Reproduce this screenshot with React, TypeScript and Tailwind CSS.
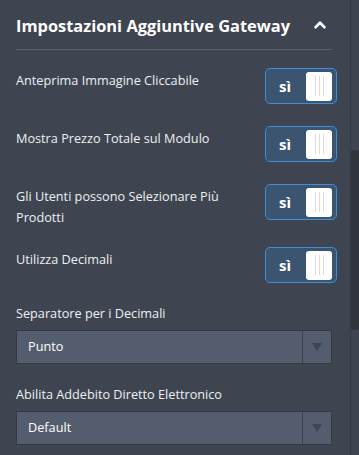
import { ChevronUp } from "lucide-react"

const toggles = [
  { label: "Anteprima Immagine Cliccabile", h: "h-[58px]" },
  { label: "Mostra Prezzo Totale sul Modulo", h: "h-[58px]" },
  { label: "Gli Utenti possono Selezionare Più Prodotti", h: "h-[63px]" },
  { label: "Utilizza Decimali", h: "h-[55px]" },
]

function Toggle() {
  return (
    <div className="flex items-center w-[72px] h-[36px] -mr-[5px] rounded-[5px] border-[1.5px] border-[#3a8fd6] bg-[#3b5470] pl-[13px] pr-[4px]">
      <span className="text-white font-bold text-[15px] w-[28px]">sì</span>
      <div className="flex items-center justify-center gap-[3px] w-[26px] h-[29px] ml-auto rounded-[3px] bg-white">
        <span className="w-[1px] h-[20px] bg-[#dcdcdc]" />
        <span className="w-[1px] h-[20px] bg-[#dcdcdc]" />
        <span className="w-[1px] h-[20px] bg-[#dcdcdc]" />
      </div>
    </div>
  )
}

function Select({ value }: { value: string }) {
  return (
    <div className="flex h-[34px] w-[316px] bg-[#535d6d] border border-[#333a44]">
      <div className="flex-1 flex items-center pl-[11px] text-[12.7px] text-white">{value}</div>
      <div className="w-[29px] flex items-center justify-center border-l border-[#3a414c]">
        <svg width="10" height="8" viewBox="0 0 10 8">
          <path d="M0 0 H10 L5 8 Z" fill="#3e4550" />
        </svg>
      </div>
    </div>
  )
}

export default function App() {
  return (
    <div
      className="flex w-[359px] h-[455px] bg-[#3e4550] text-[#eef0f3] overflow-hidden"
      style={{ fontFamily: "'Open Sans', 'Noto Sans', sans-serif" }}
    >
      <div className="w-[350px] shrink-0 pl-[16px] pr-[18px]">
        <div className="flex items-center justify-between h-[50px] border-b border-[#5a6370]">
          <h2 className="text-[16.4px] font-bold text-white pt-[3px]">Impostazioni Aggiuntive Gateway</h2>
          <ChevronUp className="w-[18px] h-[18px] text-white mr-[3px]" strokeWidth={3.5} />
        </div>
        <div className="pt-[18px]">
          {toggles.map((t) => (
            <div key={t.label} className={`flex items-start justify-between ${t.h}`}>
              <p className="text-[12.7px] leading-[21px] w-[225px] pt-[2px]">{t.label}</p>
              <Toggle />
            </div>
          ))}
        </div>
        <div className="pt-[1px]">
          <p className="text-[12.7px] leading-[20px] mb-[7px]">Separatore per i Decimali</p>
          <Select value="Punto" />
        </div>
        <div className="pt-[20px]">
          <p className="text-[12.7px] leading-[20px] mb-[7px]">Abilita Addebito Diretto Elettronico</p>
          <Select value="Default" />
        </div>
      </div>
      <div className="flex-1 border-l border-[#353b45] bg-[#3e4550] pt-[150px]">
        <div className="h-[180px] bg-[#31363e] rounded-[2px]" />
      </div>
    </div>
  )
}
